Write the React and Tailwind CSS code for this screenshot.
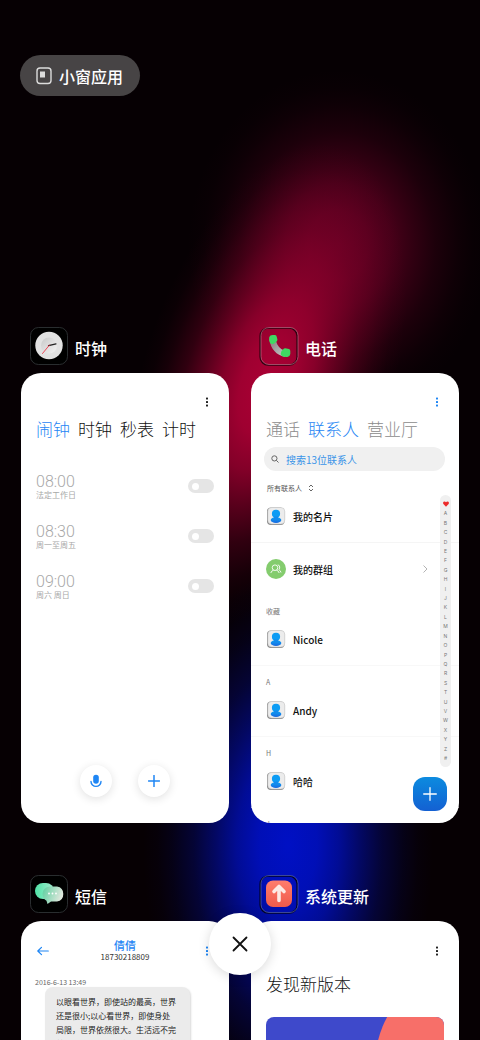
import React, { useState } from "react";

const contacts = [
  { letter: "收藏", name: "Nicole" },
  { letter: "A", name: "Andy" },
  { letter: "H", name: "哈哈" },
];

const alarmList = [
  { time: "08:00", repeat: "法定工作日" },
  { time: "08:30", repeat: "周一至周五" },
  { time: "09:00", repeat: "周六 周日" },
];

const indexLetters = "ABCDEFGHIJKLMNOPQRSTUVWXYZ#".split("");

// soft falloff shared by the wallpaper glows
const glowStops = [
  [0, 1],
  [0.2, 0.93],
  [0.35, 0.76],
  [0.5, 0.5],
  [0.65, 0.26],
  [0.8, 0.1],
  [0.9, 0.03],
  [1, 0],
];

const Glow = ({ id, color }) => (
  <radialGradient id={id}>
    {glowStops.map(([offset, opacity]) => (
      <stop key={offset} offset={offset} stopColor={color} stopOpacity={opacity} />
    ))}
  </radialGradient>
);

const Wallpaper = () => (
  <svg
    className="absolute inset-0 w-full h-full"
    viewBox="0 0 480 1040"
    preserveAspectRatio="none"
    aria-hidden="true"
  >
    <defs>
      <Glow id="red" color="#aa0034" />
      <Glow id="wine" color="#5c0020" />
      <Glow id="blue" color="#0010c4" />
    </defs>
    <rect width="480" height="1040" fill="#060003" />
    <ellipse cx="288" cy="845" rx="145" ry="275" fill="url(#blue)" />
    <ellipse cx="338" cy="245" rx="150" ry="175" fill="url(#wine)" />
    <ellipse
      cx="266"
      cy="385"
      rx="125"
      ry="250"
      fill="url(#red)"
      transform="rotate(17 266 385)"
    />
  </svg>
);

const ClockIcon = () => (
  <svg className="w-10 h-10" viewBox="0 0 40 40" aria-hidden="true">
    <defs>
      <linearGradient id="dial" x1="0" y1="0" x2="1" y2="1">
        <stop offset="0" stopColor="#c9c9c9" />
        <stop offset="1" stopColor="#f4f4f4" />
      </linearGradient>
    </defs>
    <rect x="1.5" y="1.5" width="37" height="37" rx="8" fill="#000" stroke="#34383b" strokeWidth="0.8" />
    <circle cx="20" cy="19.5" r="13.7" fill="#e2e2e2" />
    <circle cx="20" cy="19.5" r="8" fill="url(#dial)" />
    <path d="M19.5 19.7L27 17.8" stroke="#222" strokeWidth="1.2" strokeLinecap="round" />
    <path d="M20.5 19L13.5 27.5" stroke="#f0384a" strokeWidth="0.9" strokeLinecap="round" />
  </svg>
);

const PhoneIcon = () => (
  <svg className="w-10 h-10" viewBox="0 0 40 40" aria-hidden="true">
    <defs>
      <linearGradient id="handle" x1="0" y1="0" x2="1" y2="1">
        <stop offset="0" stopColor="#8a7478" />
        <stop offset="0.5" stopColor="#a5a5a5" />
        <stop offset="1" stopColor="#c9c9c9" />
      </linearGradient>
    </defs>
    <rect x="1.2" y="2" width="37" height="37" rx="8" fill="none" stroke="#300010" strokeWidth="1.6" />
    <rect x="2" y="1.5" width="37" height="37" rx="8" fill="none" stroke="#c36b86" strokeWidth="0.7" />
    <path d="M10.500 14C11.500 22.500 17.500 29.500 26 30.800L25 24.500C21 23 18.500 20 17 15Z" fill="url(#handle)" />
    <path
      d="M10.300 11Q11 9 13.500 9L16 9Q17.500 9.200 17.800 11L18.400 13.500Q18.500 15 17 16L15 17.800Q12.500 18.500 11 17Q9.500 14 10.300 11Z"
      fill="#3fda62"
    />
    <path
      d="M22.500 25L25 22.500Q26 22 27.500 22.400L30 23Q31.300 23.500 31.300 25V28Q31 30.500 28.500 31Q25 31.300 22.700 30Q21 27.500 22.500 25Z"
      fill="#3fda62"
    />
  </svg>
);

const MessageIcon = () => (
  <svg className="w-10 h-10" viewBox="0 0 40 40" aria-hidden="true">
    <defs>
      <linearGradient id="bubbleBack" x1="0" y1="0" x2="1" y2="0">
        <stop offset="0" stopColor="#4fe3a6" />
        <stop offset="1" stopColor="#a5ecd0" />
      </linearGradient>
      <linearGradient id="bubbleFront" x1="0" y1="0" x2="1" y2="0.3">
        <stop offset="0" stopColor="#5bcf9f" />
        <stop offset="1" stopColor="#dfe8dd" />
      </linearGradient>
    </defs>
    <rect x="1.5" y="1.5" width="37" height="37" rx="8" fill="#000" stroke="#34383b" strokeWidth="0.8" />
    <rect x="6" y="9" width="19" height="16" rx="8" fill="url(#bubbleBack)" />
    <path
      d="M21 12.500H28Q34.300 13.500 34.300 20Q34.300 26.500 28 27.500H22L18.500 30L17.500 26.800Q13.500 24.500 13.500 20Q13.500 13.500 21 12.500Z"
      fill="url(#bubbleFront)"
    />
    <circle cx="20" cy="19.500" r="0.900" fill="#fff" />
    <circle cx="23.500" cy="19.500" r="0.900" fill="#fff" />
    <circle cx="27" cy="19.500" r="0.900" fill="#fff" />
  </svg>
);

const UpdateIcon = () => (
  <svg className="w-10 h-10" viewBox="0 0 40 40" aria-hidden="true">
    <defs>
      <linearGradient id="coral" x1="0" y1="0" x2="0" y2="1">
        <stop offset="0" stopColor="#ff7d6c" />
        <stop offset="1" stopColor="#ef5a4b" />
      </linearGradient>
    </defs>
    <rect x="1.2" y="2" width="37" height="37" rx="8" fill="none" stroke="#020428" strokeWidth="1.6" />
    <rect x="2" y="1.5" width="37" height="37" rx="8" fill="none" stroke="#5666b4" strokeWidth="0.7" />
    <rect x="7" y="6.500" width="26" height="26.500" rx="7" fill="url(#coral)" />
    <path
      d="M20 26.500V14M15 17.500L20 12.500L25 17.500"
      fill="none"
      stroke="#fde9e3"
      strokeWidth="3.600"
      strokeLinecap="round"
      strokeLinejoin="round"
    />
  </svg>
);

const Avatar = () => (
  <svg className="w-5 h-5 shrink-0" viewBox="0 0 20 20" aria-hidden="true">
    <defs>
      <linearGradient id="person" x1="0" y1="0" x2="0" y2="1">
        <stop offset="0" stopColor="#0ea5f5" />
        <stop offset="1" stopColor="#1768e0" />
      </linearGradient>
    </defs>
    <rect x="1" y="1.500" width="17.500" height="17.500" rx="4" fill="#8b8b8b" />
    <rect x="1.800" y="1.500" width="17" height="16.500" rx="4" fill="#ececec" stroke="#c4c4c4" strokeWidth="0.5" />
    <ellipse cx="10" cy="14" rx="5.300" ry="3" fill="url(#person)" />
    <circle cx="10" cy="7.800" r="4.100" fill="#0c9cf4" />
    <path d="M8 10.500H12V13H8Z" fill="#128bee" />
  </svg>
);

const MoreButton = ({ className }) => (
  <button type="button" aria-label="更多" className={className}>
    <svg className="w-3 h-3" viewBox="0 0 12 12" fill="currentColor" aria-hidden="true">
      <rect x="5" y="1.500" width="2" height="2" rx="0.600" />
      <rect x="5" y="5" width="2" height="2" rx="0.600" />
      <rect x="5" y="8.500" width="2" height="2" rx="0.600" />
    </svg>
  </button>
);

const AppWindow = ({ icon, title, children }) => (
  <section>
    <h2 className="flex items-center gap-[6px] h-10 pl-2 text-base font-medium text-white">
      {icon}
      <span className="pt-[3px]">{title}</span>
    </h2>
    <div className="relative mt-[7px] w-full aspect-[208/450] overflow-hidden rounded-[20px] bg-white flex flex-col">
      {children}
    </div>
  </section>
);

const ClockWindow = () => {
  const [enabled, setEnabled] = useState([false, false, false]);

  const toggleAlarm = (index) => {
    setEnabled(enabled.map((on, i) => (i === index ? !on : on)));
  };

  return (
    <AppWindow icon={<ClockIcon />} title="时钟">
      <div className="flex justify-end pt-[23px] pr-4">
        <MoreButton className="flex text-[#222]" />
      </div>
      <nav className="flex gap-2 mt-2 pl-[15px] text-[17px] leading-[26px] font-light whitespace-nowrap">
        <button type="button" className="text-[#1f86f4]">闹钟</button>
        <button type="button" className="text-[#111]">时钟</button>
        <button type="button" className="text-[#111]">秒表</button>
        <button type="button" className="text-[#111]">计时</button>
      </nav>
      <ul className="mt-[19px] pl-[15px] pr-[15px]">
        {alarmList.map((item, index) => (
          <li key={item.time} className="h-[50px]">
            <label className="flex items-center justify-between h-full cursor-pointer">
              <span className="flex flex-col text-[#a8a8a8]">
                <span className="text-base leading-[17px] font-light font-['Roboto','Noto_Sans_CJK_SC',sans-serif]">
                  {item.time}
                </span>
                <span className="text-[8px] leading-[10px]">{item.repeat}</span>
              </span>
              <input
                type="checkbox"
                role="switch"
                checked={enabled[index]}
                onChange={() => toggleAlarm(index)}
                className="appearance-none flex items-center w-[26px] h-[14px] px-1 rounded-full bg-[#e5e5e5] checked:bg-[#2a8ff0] checked:justify-end before:block before:w-[7px] before:h-[7px] before:rounded-full before:bg-white"
              />
            </label>
          </li>
        ))}
      </ul>
      <div className="flex justify-center gap-[26px] mt-auto mb-[26px]">
        <button
          type="button"
          aria-label="语音"
          className="flex items-center justify-center w-8 h-8 rounded-full bg-white shadow-[0_2px_10px_rgba(0,0,0,0.12)]"
        >
          <svg className="w-3 h-[14px]" viewBox="0 0 12 14" aria-hidden="true">
            <rect x="3.200" y="0.800" width="5.600" height="9" rx="2.800" fill="#1f86f4" />
            <path d="M1 7.500A5 4.900 0 0 0 11 7.500" fill="none" stroke="#1f86f4" strokeWidth="1.400" strokeLinecap="round" />
          </svg>
        </button>
        <button
          type="button"
          aria-label="添加闹钟"
          className="flex items-center justify-center w-8 h-8 rounded-full bg-white shadow-[0_2px_10px_rgba(0,0,0,0.12)]"
        >
          <svg className="w-3 h-3" viewBox="0 0 12 12" aria-hidden="true">
            <path d="M6 0.500V11.500M0.500 6H11.500" stroke="#1f86f4" strokeWidth="1.500" strokeLinecap="round" />
          </svg>
        </button>
      </div>
    </AppWindow>
  );
};

const ContactsWindow = () => (
  <AppWindow icon={<PhoneIcon />} title="电话">
    <div className="flex justify-end pt-[23px] pr-4">
      <MoreButton className="flex text-[#1f86f4]" />
    </div>
    <nav className="flex gap-2 mt-2 pl-[15px] text-[17px] leading-[26px] font-light whitespace-nowrap">
      <button type="button" className="text-[#8c8c8c]">通话</button>
      <button type="button" className="text-[#1f86f4]">联系人</button>
      <button type="button" className="text-[#8c8c8c]">营业厅</button>
    </nav>
    <label className="flex items-center gap-[7px] shrink-0 h-6 mt-[5px] ml-[13px] mr-[14px] pl-[7px] rounded-full bg-[#f0f0f0]">
      <svg className="w-2 h-2 shrink-0" viewBox="0 0 8 8" fill="none" stroke="#666" aria-hidden="true">
        <circle cx="3.400" cy="3.400" r="2.600" />
        <path d="M5.300 5.300L7.500 7.500" />
      </svg>
      <input
        type="text"
        aria-label="搜索联系人"
        placeholder="搜索13位联系人"
        className="min-w-0 flex-1 bg-transparent outline-none text-[10px] text-[#222] placeholder:text-[#3a94e8]"
      />
    </label>
    <button type="button" className="flex items-center gap-[6px] shrink-0 h-[18px] mt-2 pl-4 text-[7px] text-[#555]">
      所有联系人
      <svg className="w-[6px] h-2" viewBox="0 0 6 8" fill="none" stroke="#555" strokeWidth="0.900" aria-hidden="true">
        <path d="M1 3L3 1L5 3M1 5L3 7L5 5" />
      </svg>
    </button>
    <div className="text-[10px] font-medium text-[#111]">
      <a href="#card" className="flex items-center gap-[7px] h-[53px] -mt-[7px] pl-[15px] border-b border-[#f5f5f5]">
        <Avatar />
        我的名片
      </a>
      <a href="#groups" className="flex items-center gap-[7px] h-[52px] pl-[15px] pr-[30px]">
        <svg className="w-5 h-5" viewBox="0 0 20 20" fill="none" stroke="#fff" strokeWidth="0.900" aria-hidden="true">
          <circle cx="10" cy="10" r="10" fill="#84cc6e" stroke="none" />
          <circle cx="9" cy="8.700" r="2.800" />
          <path d="M4.800 14Q5.300 11.800 7.500 11.200M10.500 11.200Q12.700 11.800 13.200 14M11.800 5.800Q14.200 6.300 13.700 9Q13.500 10 12.800 10.500Q14.500 11.500 15 13.500" />
        </svg>
        我的群组
        <svg className="w-2 h-2 ml-auto" viewBox="0 0 8 8" fill="none" stroke="#aaa" strokeWidth="0.900" aria-hidden="true">
          <path d="M2.500 0.500L6 4L2.500 7.500" />
        </svg>
      </a>
    </div>
    <ul>
      {contacts.map((item) => (
        <li key={item.name} className="h-[71px] pt-[11px] border-b border-[#f8f8f8] last:border-white">
          <p className="pl-[15px] text-[7px] leading-[11px] text-[#777]">{item.letter}</p>
          <a href="#contact" className="flex items-center gap-[7px] h-5 mt-[12px] pl-[15px] text-[10px] font-medium text-[#111]">
            <Avatar />
            {item.name}
          </a>
        </li>
      ))}
    </ul>
    <p className="pt-[11px] pl-[15px] text-[7px] leading-[11px] text-[#777]">J</p>
    <div className="absolute top-[122px] right-2 flex flex-col items-center justify-between w-[11px] h-[272px] py-[5px] rounded-full bg-[#f0f0f0] text-[5px] leading-[8px] text-[#777] font-['Inter',sans-serif]">
      <svg className="w-[6px] h-2" viewBox="0 0 6 8" fill="#ec2a2a" aria-hidden="true">
        <path d="M3 6.800L0.400 4Q-0.300 2.800 0.600 1.800Q2 0.800 3 2.300Q4 0.800 5.400 1.800Q6.300 2.800 5.600 4Z" />
      </svg>
      {indexLetters.map((letter) => (
        <span key={letter}>{letter}</span>
      ))}
    </div>
    <button
      type="button"
      aria-label="新建联系人"
      className="absolute right-3 bottom-3 flex items-center justify-center w-[34px] h-[34px] rounded-xl bg-linear-to-b from-[#0d8bdf] to-[#1460d2]"
    >
      <svg className="w-[14px] h-[14px]" viewBox="0 0 14 14" stroke="#fff" strokeWidth="1.300" strokeLinecap="round" aria-hidden="true">
        <path d="M7 0.700V13.300M0.700 7H13.300" />
      </svg>
    </button>
  </AppWindow>
);

const MessageWindow = () => (
  <AppWindow icon={<MessageIcon />} title="短信">
    <header className="flex items-center justify-between pt-[18px] pl-4 pr-4">
      <button type="button" aria-label="返回">
        <svg className="w-3 h-3" viewBox="0 0 12 12" fill="none" stroke="#1f86f4" strokeWidth="1.200" strokeLinecap="round" strokeLinejoin="round" aria-hidden="true">
          <path d="M11.300 6H0.800M4.500 2.300L0.800 6L4.500 9.700" />
        </svg>
      </button>
      <div className="flex flex-col items-center">
        <h3 className="text-[11px] leading-[13px] font-medium text-[#1f86f4]">倩倩</h3>
        <p className="text-[8px] leading-[10px] text-[#333]">18730218809</p>
      </div>
      <MoreButton className="flex text-[#1f86f4]" />
    </header>
    <time className="mt-[15px] pl-[14px] text-[7px] leading-[10px] text-[#666]">2016-6-13 13:49</time>
    <p className="ml-6 mr-[39px] pl-[11px] pr-3 py-[8px] rounded-lg bg-[#ebebeb] shadow-[1px_1px_2px_rgba(0,0,0,0.15)] text-[8px] leading-[14px] text-[#222]">
      以眼看世界，即使站的最高，世界
      <br />
      还是很小;以心看世界，即使身处
      <br />
      局限，世界依然很大。生活远不完
      <br />
      美，只要用心去体会，已足够丰富
    </p>
  </AppWindow>
);

const UpdateWindow = () => (
  <AppWindow icon={<UpdateIcon />} title="系统更新">
    <div className="flex justify-end pt-[24px] pr-4">
      <MoreButton className="flex text-[#222]" />
    </div>
    <h3 className="mt-[14px] pl-[15px] text-[17px] leading-[26px] font-light text-[#111]">发现新版本</h3>
    <svg className="w-auto mt-5 mx-[15px] rounded-lg" viewBox="0 0 178 240" aria-hidden="true">
      <rect width="178" height="240" fill="#3e49cb" />
      <circle cx="210" cy="48" r="101" fill="#f76f69" />
    </svg>
  </AppWindow>
);

const App = () => {
  return (
    <main className="relative h-screen overflow-hidden bg-[#060003] font-['Noto_Sans_CJK_SC',sans-serif]">
      <Wallpaper />
      <div className="relative px-[21px] pt-[55px]">
        <button
          type="button"
          className="flex items-center gap-[7px] h-[41px] -ml-px pl-4 pr-[17px] rounded-full bg-[#474445] text-base font-medium text-white"
        >
          <svg className="w-4 h-[18px]" viewBox="0 0 16 18" aria-hidden="true">
            <rect x="1" y="1" width="14" height="15.500" rx="3" fill="none" stroke="#dcdcdc" strokeWidth="1.400" />
            <rect x="4" y="4.500" width="5" height="6" fill="#dcdcdc" />
          </svg>
          小窗应用
        </button>
        <div className="grid grid-cols-2 gap-x-[22px] gap-y-[51px] mt-[230px]">
          <ClockWindow />
          <ContactsWindow />
          <MessageWindow />
          <UpdateWindow />
        </div>
      </div>
      <button
        type="button"
        aria-label="全部关闭"
        className="absolute left-1/2 bottom-[65px] -translate-x-1/2 flex items-center justify-center w-[62px] h-[62px] rounded-full bg-white shadow-[0_2px_12px_rgba(0,0,0,0.15)]"
      >
        <svg className="w-4 h-4" viewBox="0 0 16 16" stroke="#111" strokeWidth="1.800" strokeLinecap="round" aria-hidden="true">
          <path d="M1.500 1.500L14.500 14.500M14.500 1.500L1.500 14.500" />
        </svg>
      </button>
    </main>
  );
};

export default App;
